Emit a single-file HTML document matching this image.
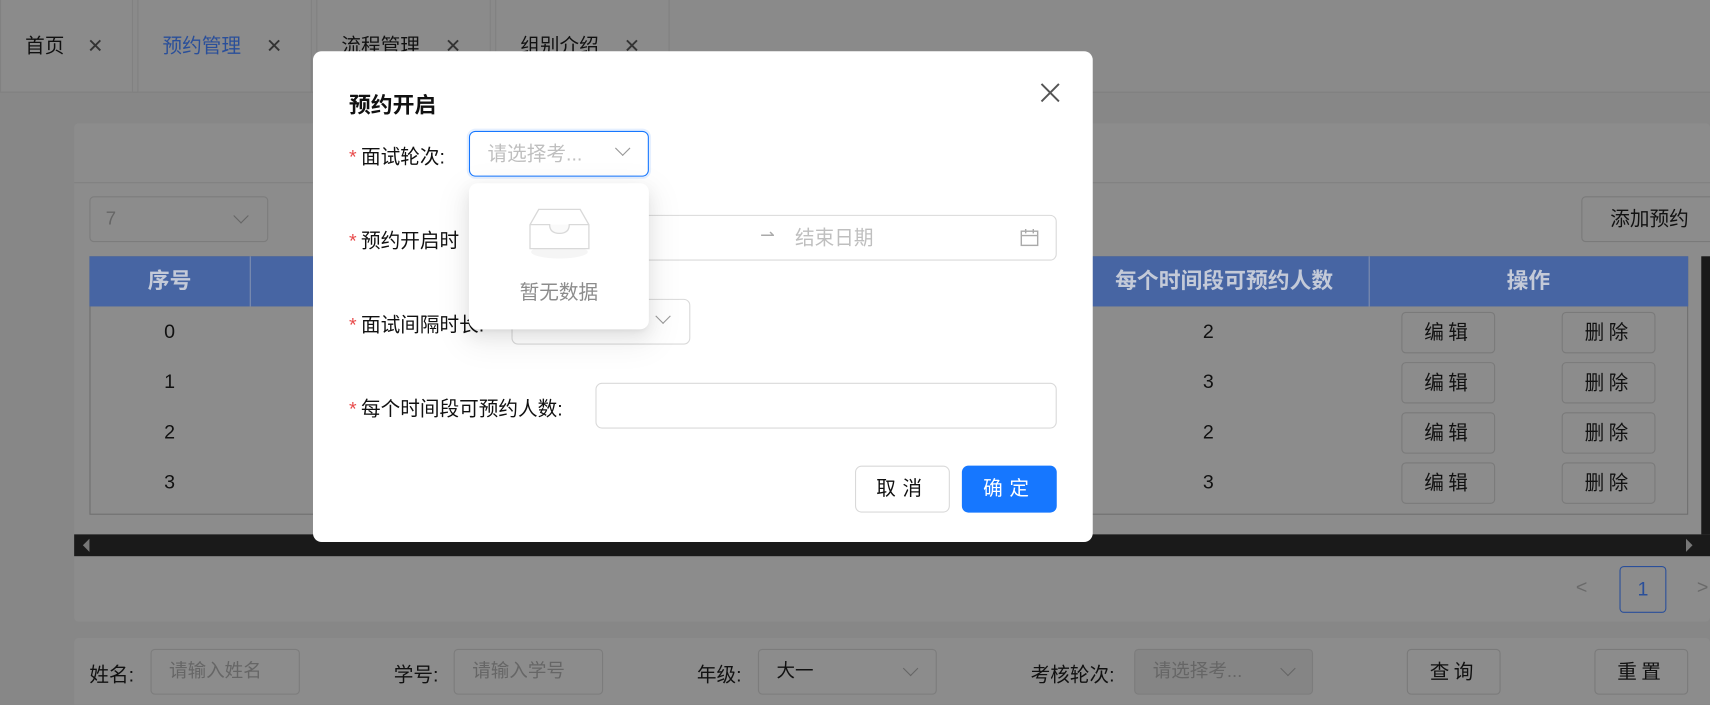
<!DOCTYPE html>
<html><head><meta charset="utf-8"><style>
*{box-sizing:border-box;margin:0;padding:0}
body{width:1710px;height:704px;overflow:hidden;background:#878787;font-family:"Liberation Sans","Noto Sans CJK SC",sans-serif;}
#w{position:absolute;left:0;top:0;width:1568px;height:646px;transform:scale(1.09056);transform-origin:0 0;background:#878787;overflow:hidden}
.a{position:absolute}
.tab{position:absolute;top:0;height:85px;background:#8b8b8b;border:1px solid #818181;border-top:none;font-size:18px;color:#111;line-height:85px;padding-left:22px}
.tab .x{position:absolute;right:26px;top:0;color:#333;font-size:18px}
.card{position:absolute;background:#8c8c8c;border-radius:4px}
.sel{position:absolute;border:1px solid #7c7c7c;border-radius:4px;background:#8c8c8c;color:#555;font-size:17px}
.btn{position:absolute;border:1px solid #7a7a7a;border-radius:4px;background:#8c8c8c;color:#111;font-size:18px;text-align:center;letter-spacing:4px}
.cell{position:absolute;font-size:18px;color:#111;text-align:center}
.th{position:absolute;top:235px;height:46px;line-height:46px;color:#c4cad8;font-size:20px;font-weight:bold;text-align:center}
.lab{position:absolute;font-size:18px;color:#111}
.lab i{color:#e84a4a;font-style:normal;margin-right:4px}
.inp{position:absolute;border:1px solid #d9d9d9;border-radius:6px;background:#fff;font-size:18px;color:#bfbfbf}
.chev{position:absolute;width:10px;height:10px;border-right:1.5px solid #aaa;border-bottom:1.5px solid #aaa;transform:rotate(45deg)}
</style></head><body><div id="w">
<div class="a" style="left:0;top:0;width:1568px;height:85px;background:#8a8a8a;border-bottom:1px solid #7f7f7f"></div>
<div class="tab" style="left:0;width:122px">首页<span class="x">✕</span></div>
<div class="tab" style="left:126px;width:160px;color:#2a4f9a">预约管理<span class="x">✕</span></div>
<div class="tab" style="left:290px;width:160px">流程管理<span class="x">✕</span></div>
<div class="tab" style="left:454px;width:160px">组别介绍<span class="x">✕</span></div>

<div class="card" style="left:68px;top:113px;width:1500px;height:457px"></div>
<div class="a" style="left:68px;top:167px;width:1500px;height:1px;background:#818181"></div>
<div class="sel" style="left:82px;top:180px;width:164px;height:42px;line-height:40px;padding-left:14px;color:#666">7</div>
<div class="chev" style="left:216px;top:193px;border-color:#666"></div>
<div class="btn" style="left:1450px;top:180px;width:125px;height:42px;line-height:40px;letter-spacing:0">添加预约</div>
<div class="a" style="left:82px;top:235px;width:1466px;height:237px;border:1px solid #6f6f6f"></div>
<div class="a" style="left:82px;top:235px;width:1466px;height:46px;background:#4765a3"></div>
<div class="a" style="left:229px;top:235px;width:1px;height:46px;background:#8090b0"></div>
<div class="a" style="left:1255px;top:235px;width:1px;height:46px;background:#8090b0"></div>
<div class="th" style="left:82px;width:147px">序号</div>
<div class="th" style="left:990px;width:265px">每个时间段可预约人数</div>
<div class="th" style="left:1255px;width:293px">操作</div>
<div class="a" style="left:1560px;top:235px;width:8px;height:255px;background:#1a1a1a"></div>
<div class="cell" style="left:82px;top:294px;width:147px">0</div>
<div class="cell" style="left:82px;top:340px;width:147px">1</div>
<div class="cell" style="left:82px;top:386px;width:147px">2</div>
<div class="cell" style="left:82px;top:432px;width:147px">3</div>
<div class="cell" style="left:1070px;top:294px;width:76px">2</div>
<div class="cell" style="left:1070px;top:340px;width:76px">3</div>
<div class="cell" style="left:1070px;top:386px;width:76px">2</div>
<div class="cell" style="left:1070px;top:432px;width:76px">3</div>
<div class="btn" style="left:1285px;top:286px;width:86px;height:38px;line-height:36px">编辑</div>
<div class="btn" style="left:1432px;top:286px;width:86px;height:38px;line-height:36px">删除</div>
<div class="btn" style="left:1285px;top:332px;width:86px;height:38px;line-height:36px">编辑</div>
<div class="btn" style="left:1432px;top:332px;width:86px;height:38px;line-height:36px">删除</div>
<div class="btn" style="left:1285px;top:378px;width:86px;height:38px;line-height:36px">编辑</div>
<div class="btn" style="left:1432px;top:378px;width:86px;height:38px;line-height:36px">删除</div>
<div class="btn" style="left:1285px;top:424px;width:86px;height:38px;line-height:36px">编辑</div>
<div class="btn" style="left:1432px;top:424px;width:86px;height:38px;line-height:36px">删除</div>
<div class="a" style="left:68px;top:490px;width:1500px;height:20px;background:#1a1a1a"></div>
<div class="a" style="left:76px;top:494px;width:0;height:0;border:6px solid transparent;border-right:6px solid #777;border-left:none"></div>
<div class="a" style="left:1546px;top:494px;width:0;height:0;border:6px solid transparent;border-left:6px solid #777;border-right:none"></div>
<div class="a" style="left:1445px;top:528px;font-size:18px;color:#6a6a6a">&lt;</div>
<div class="a" style="left:1485px;top:519px;width:43px;height:43px;border:1px solid #2a4f9a;border-radius:4px;color:#2a4f9a;font-size:18px;text-align:center;line-height:41px">1</div>
<div class="a" style="left:1556px;top:528px;font-size:18px;color:#6a6a6a">&gt;</div>

<div class="card" style="left:68px;top:585px;width:1500px;height:70px"></div>
<div class="lab" style="left:82px;top:605px">姓名:</div>
<div class="sel" style="left:138px;top:595px;width:137px;height:42px;line-height:40px;padding-left:16px;color:#666">请输入姓名</div>
<div class="lab" style="left:361px;top:605px">学号:</div>
<div class="sel" style="left:416px;top:595px;width:137px;height:42px;line-height:40px;padding-left:16px;color:#666">请输入学号</div>
<div class="lab" style="left:639px;top:605px">年级:</div>
<div class="sel" style="left:695px;top:595px;width:164px;height:42px;line-height:40px;padding-left:16px;color:#111">大一</div>
<div class="chev" style="left:830px;top:608px;border-color:#666"></div>
<div class="lab" style="left:945px;top:605px">考核轮次:</div>
<div class="sel" style="left:1040px;top:595px;width:164px;height:42px;line-height:40px;padding-left:16px;color:#666;background:#858585">请选择考...</div>
<div class="chev" style="left:1176px;top:608px;border-color:#666"></div>
<div class="btn" style="left:1290px;top:595px;width:86px;height:42px;line-height:40px">查询</div>
<div class="btn" style="left:1462px;top:595px;width:86px;height:42px;line-height:40px">重置</div>

<!-- modal -->
<div class="a" style="left:287px;top:47px;width:715px;height:450px;background:#fff;border-radius:8px"></div>
<div class="a" style="left:320px;top:80px;font-size:20px;font-weight:bold;color:#111">预约开启</div>
<svg class="a" style="left:953px;top:75px" width="20" height="20" viewBox="0 0 20 20"><path d="M2 2L18 18M18 2L2 18" stroke="#555" stroke-width="1.8"/></svg>
<div class="lab" style="left:320px;top:130px"><i>*</i>面试轮次:</div>
<div class="inp" style="left:430px;top:120px;width:165px;height:42px;line-height:40px;padding-left:16px;border-color:#1677ff;box-shadow:0 0 0 2px #e6f0ff">请选择考...</div>
<div class="chev" style="left:566px;top:131px;border-color:#999"></div>
<div class="lab" style="left:320px;top:207px"><i>*</i>预约开启时</div>
<div class="inp" style="left:470px;top:197px;width:499px;height:42px;line-height:40px;padding-left:258px">结束日期</div>
<div class="a" style="left:697px;top:206px;font-size:16px;color:#aaa">⇀</div>
<svg class="a" style="left:935px;top:209px" width="18" height="18" viewBox="0 0 18 18"><rect x="1.5" y="3" width="15" height="13" fill="none" stroke="#aaa" stroke-width="1.3"/><path d="M1.5 7H16.5M5.5 1v4M12.5 1v4" stroke="#aaa" stroke-width="1.3"/></svg>
<div class="lab" style="left:320px;top:284px"><i>*</i>面试间隔时长:</div>
<div class="inp" style="left:469px;top:274px;width:164px;height:42px"></div>
<div class="chev" style="left:603px;top:285px;border-color:#999"></div>
<div class="lab" style="left:320px;top:361px"><i>*</i>每个时间段可预约人数:</div>
<div class="inp" style="left:546px;top:351px;width:423px;height:42px"></div>
<div class="a" style="left:784px;top:427px;width:87px;height:43px;border:1px solid #d9d9d9;border-radius:6px;text-align:center;line-height:41px;font-size:18px;letter-spacing:6px;color:#111">取消</div>
<div class="a" style="left:882px;top:427px;width:87px;height:43px;background:#1677ff;border-radius:6px;text-align:center;line-height:43px;font-size:18px;letter-spacing:6px;color:#fff">确定</div>
<!-- dropdown -->
<div class="a" style="left:430px;top:168px;width:165px;height:134px;background:#fff;border-radius:8px;box-shadow:0 6px 16px rgba(0,0,0,0.08),0 3px 6px -4px rgba(0,0,0,0.12),0 9px 28px 8px rgba(0,0,0,0.05)"></div>
<svg class="a" style="left:474px;top:188px" width="78" height="52" viewBox="0 0 78 52"><ellipse cx="39" cy="43" rx="26" ry="6" fill="#f5f5f5"/><path d="M12 18L20 4H58L66 18V40H12Z" fill="#fff" stroke="#d9d9d9" stroke-width="1.2"/><path d="M12 18H30Q30 26 39 26Q48 26 48 18H66" fill="#fafafa" stroke="#d9d9d9" stroke-width="1.2"/></svg>
<div class="a" style="left:430px;top:254px;width:165px;text-align:center;font-size:18px;color:#8c8c8c">暂无数据</div>
</div></body></html>
